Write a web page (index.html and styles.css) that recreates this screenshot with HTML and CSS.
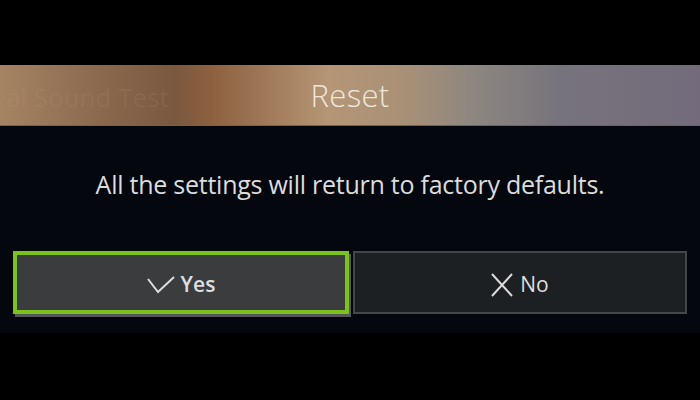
FILE: index.html
```html
<!DOCTYPE html>
<html lang="en">
<head>
<meta charset="utf-8">
<title>Reset</title>
<link rel="stylesheet" href="styles.css">
</head>
<body>
<div class="stage">
  <div class="dialog">
    <div class="header">
      <span class="ghost">al Sound Test</span>
      <h1 class="title">Reset</h1>
    </div>
    <p class="message">All the settings will return to factory defaults.</p>
    <div class="buttons">
      <button class="btn btn-focused">
        <svg class="icon icon-check" width="28" height="18" viewBox="0 0 28 18"><polyline points="1,3 11,16 27,1" fill="none" stroke="#dcdcdc" stroke-width="2"/></svg>
        <span class="label label-bold">Yes</span>
      </button>
      <button class="btn">
        <svg class="icon icon-x" width="22" height="24" viewBox="0 0 22 24"><path d="M1 1 L21 23 M21 1 L1 23" fill="none" stroke="#dcdcdc" stroke-width="2"/></svg>
        <span class="label">No</span>
      </button>
    </div>
  </div>
</div>
</body>
</html>
```
FILE: styles.css
```css
html, body {
  margin: 0;
  padding: 0;
  background: #000;
  width: 700px;
  height: 400px;
  overflow: hidden;
  font-family: "Open Sans", "Noto Sans", sans-serif;
}
.stage {
  padding-top: 65px;
}
.dialog {
  background: #05070e;
  height: 268px;
  display: flex;
  flex-direction: column;
}
.header {
  position: relative;
  height: 60px;
  border-bottom: 1px solid #6a6560;
  background: linear-gradient(90deg, #a58463 0%, #8f6d52 12%, #7a5840 25%, #8c603f 30%, #a57f5e 40%, #b59676 47%, #a89077 58%, #8c8680 68%, #77737c 80%, #736b7b 100%);
  display: flex;
  align-items: center;
  justify-content: center;
}
.ghost {
  position: absolute;
  left: 6px;
  top: 14px;
  font-size: 26px;
  color: rgba(210, 180, 150, 0.1);
  font-weight: 400;
}
.title {
  margin: 0;
  font-size: 31px;
  font-weight: 300;
  color: #efe7df;
  letter-spacing: 0.3px;
}
.message {
  margin: 0;
  height: 125px;
  display: flex;
  align-items: center;
  justify-content: center;
  padding-bottom: 10px;
  box-sizing: border-box;
  font-size: 25px;
  font-weight: 400;
  color: #dcdcdc;
  letter-spacing: -0.25px;
}
.buttons {
  display: grid;
  grid-template-columns: 336px 334px;
  gap: 4px;
  padding: 0 13px;
}
.btn {
  height: 63px;
  display: flex;
  align-items: center;
  justify-content: center;
  gap: 7px;
  background: #1d2023;
  border: 2px solid #44474a;
  box-sizing: border-box;
  color: #dcdcdc;
  font-family: inherit;
  padding: 4px 0 0;
}
.btn-focused {
  background: #3a3c3e;
  border: 4px solid #7cc21f;
  box-shadow: 2px 3px 0 #55575a;
  gap: 6px;
}
.label {
  font-size: 21px;
  line-height: 1;
  color: #dedede;
}
.label-bold {
  font-weight: 600;
}
.icon {
  display: block;
}
```
